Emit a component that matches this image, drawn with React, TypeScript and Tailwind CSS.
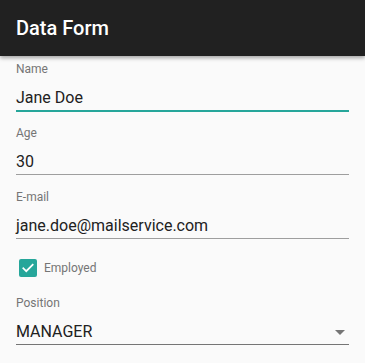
import React from "react";

function Field({ label, value, focused }: { label: string; value: string; focused?: boolean }) {
  return (
    <div className="flex h-16 flex-col">
      <div className="h-4 text-[12px] leading-4 text-[#757575]">{label}</div>
      <div className="mt-[9px] h-6 text-[16px] leading-6 text-[#212121]">{value}</div>
      {focused ? (
        <div className="h-[2px] w-full bg-[#26a69a]" />
      ) : (
        <div className="h-px w-full bg-[#9e9e9e]" />
      )}
    </div>
  );
}

export default function App() {
  return (
    <div
      className="flex h-[363px] w-[365px] flex-col overflow-hidden bg-[#fafafa]"
      style={{ fontFamily: "Roboto, 'Noto Sans', sans-serif" }}
    >
      <div className="relative z-10 flex h-14 shrink-0 items-center bg-[#212121] px-4 shadow-[0_2px_4px_rgba(0,0,0,0.35)]">
        <span className="text-[20px] font-medium leading-7 text-white">Data Form</span>
      </div>
      <div className="flex flex-col px-4 pt-[5px]">
        <Field label="Name" value="Jane Doe" focused />
        <Field label="Age" value="30" />
        <Field label="E-mail" value="jane.doe@mailservice.com" />
        <div className="flex h-[30px] items-center">
          <div className="flex h-6 w-6 items-center justify-center">
            <div className="flex h-[18px] w-[18px] items-center justify-center rounded-[2px] bg-[#26a69a]">
              <svg width="14" height="14" viewBox="0 0 24 24" fill="none">
                <path d="M4 12.5l5 5L20 6.5" stroke="white" strokeWidth="3" strokeLinecap="square" />
              </svg>
            </div>
          </div>
          <span className="ml-1 text-[12px] leading-4 text-[#757575]">Employed</span>
        </div>
        <div className="mt-3 flex flex-col">
          <div className="h-4 text-[12px] leading-4 text-[#757575]">Position</div>
          <div className="mt-[9px] flex h-6 items-center justify-between">
            <span className="text-[16px] leading-6 text-[#212121]">MANAGER</span>
            <svg width="10" height="5" viewBox="0 0 10 5" className="mr-1">
              <path d="M0 0h10L5 5z" fill="#757575" />
            </svg>
          </div>
          <div className="h-px w-full bg-[#757575]" />
        </div>
      </div>
    </div>
  );
}
